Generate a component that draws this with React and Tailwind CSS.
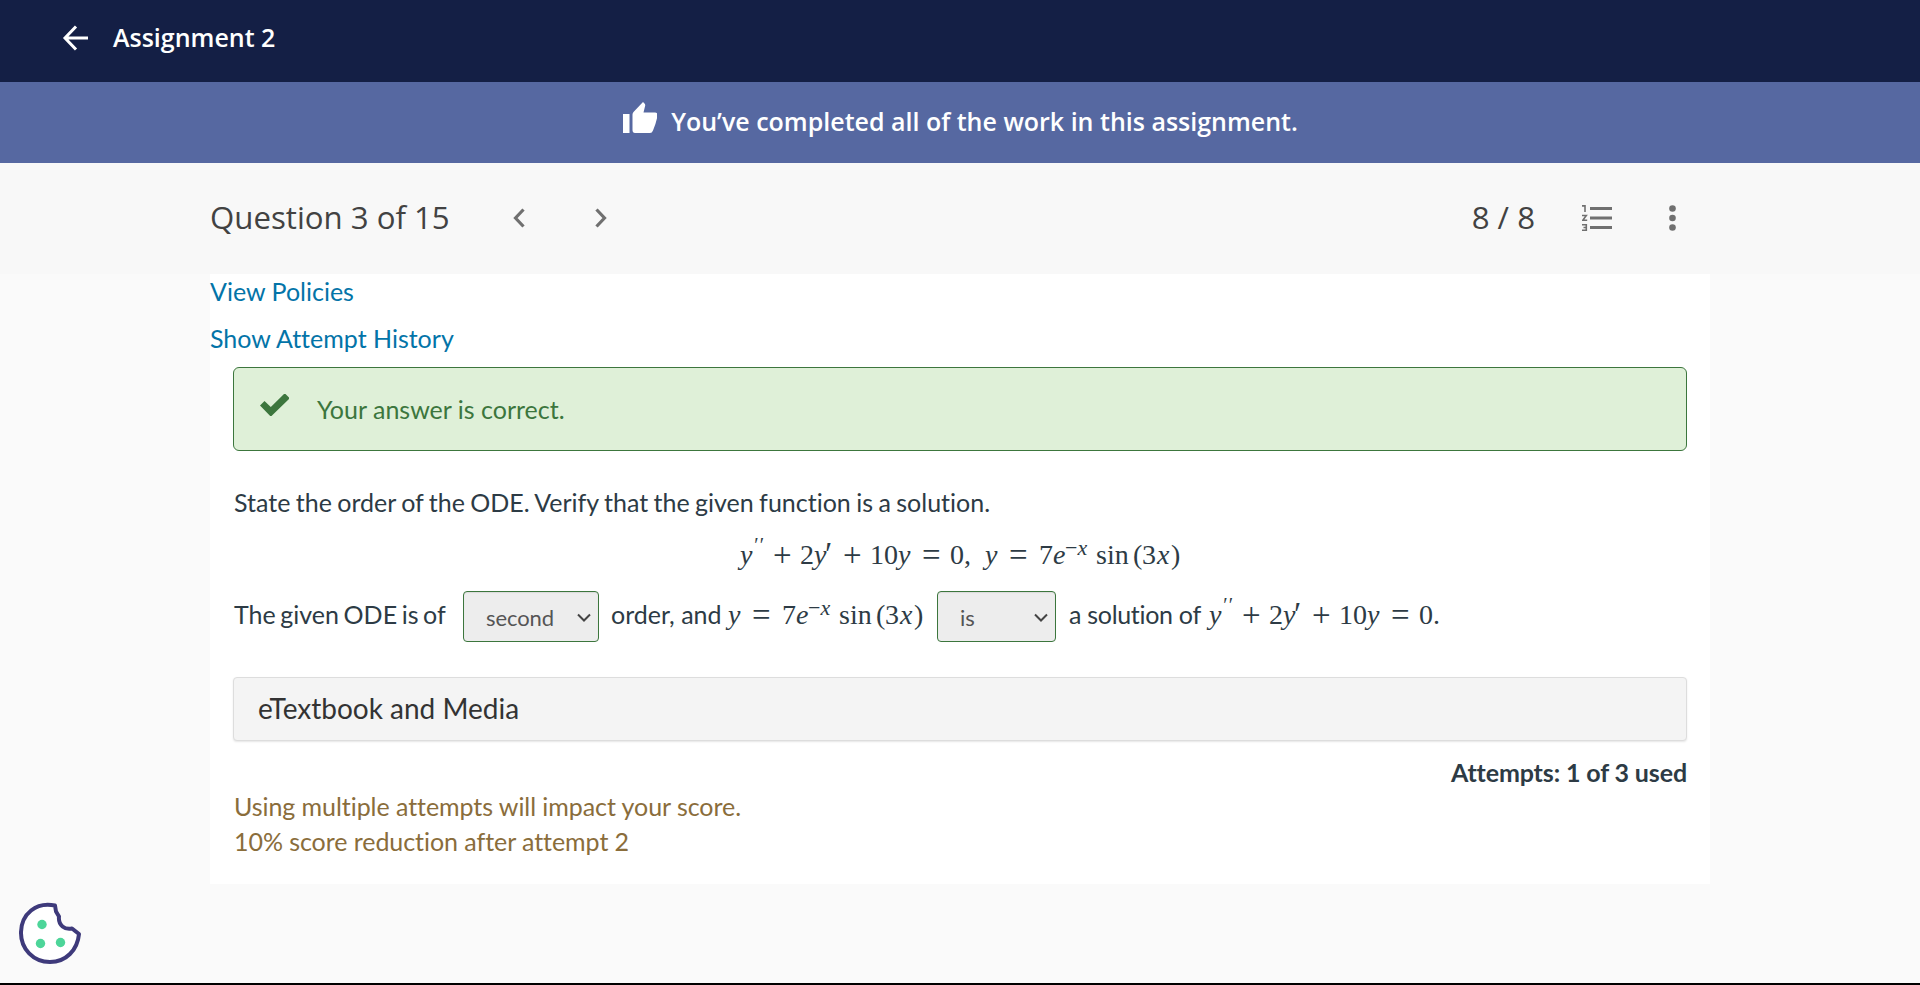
import React from "react";

const sans = "font-['Open_Sans','Noto_Sans',sans-serif]";

function Tok({ w, italic, children }) {
  return (
    <span className={`inline-block whitespace-nowrap ${w} ${italic ? "italic" : ""}`}>{children}</span>
  );
}

function Op({ w, children }) {
  return (
    <span className={`relative top-[2px] inline-block text-[33px] leading-none ${w}`}>{children}</span>
  );
}

function Derivatives() {
  return (
    <>
      <Tok w="w-[13px]" italic>y</Tok>
      <span className="relative -top-[12px] inline-block w-[20px] text-[20px] italic leading-none tracking-[1px]">′′</span>
      <Op w="w-[27px]">+</Op>
      <Tok w="w-[14px]">2</Tok>
      <Tok w="w-[9px]" italic>y</Tok>
      <span className="relative top-px inline-block w-[20px] text-[33px] italic leading-none">′</span>
      <Op w="w-[27px]">+</Op>
      <Tok w="w-[28px]">10</Tok>
      <Tok w="w-[24px]" italic>y</Tok>
      <Op w="w-[28px]">=</Op>
    </>
  );
}

function Solution() {
  return (
    <>
      <Tok w="w-[24px]" italic>y</Tok>
      <Op w="w-[30px]">=</Op>
      <Tok w="w-[14px]">7</Tok>
      <Tok w="w-[12px]" italic>e</Tok>
      <span className="relative -top-[9px] inline-block w-[31px] text-[22px] leading-none">−<i>x</i></span>
      <Tok w="w-[37px]">sin</Tok>
      <Tok w="w-[9px]">(</Tok>
      <Tok w="w-[15px]">3</Tok>
      <Tok w="w-[14px]" italic>x</Tok>
      <Tok w="w-[9px]">)</Tok>
    </>
  );
}

function Formula({ className, children }) {
  return (
    <span className={`h-[32px] font-['Liberation_Serif',serif] text-[28px] leading-[32px] whitespace-nowrap ${className}`}>{children}</span>
  );
}

function Select({ className, children }) {
  return (
    <div className={`flex h-[51px] shrink-0 items-center justify-between rounded-[4px] border border-[#3c763d] bg-[#ededed] pl-[22px] pr-[7px] pt-[2px] text-[22px] tracking-[-0.100px] text-[#555] shadow-[inset_0_1px_1px_rgba(0,0,0,0.08)] ${className}`}>
      <span>{children}</span>
      <svg className="h-[10px] w-[14px]" viewBox="0 0 14 10" fill="none" stroke="#444" strokeWidth="2">
        <path d="M1 1.5l6 6 6-6" />
      </svg>
    </div>
  );
}

export default function App() {
  return (
    <div className="flex h-[985px] w-[1920px] flex-col overflow-hidden border-b-2 border-black bg-[#fafafa] font-['Lato',sans-serif] text-[25px] text-[#2d3b45] [font-variant-ligatures:none]">
      <header className={`flex h-[82px] shrink-0 items-center bg-[#141f45] pb-[6px] pl-[62px] text-white ${sans}`}>
        <svg className="h-[26px] w-[26px]" viewBox="0 0 26 26" fill="none" stroke="#fff" strokeWidth="3">
          <path d="M14 1.500L3 13l11 11.500M3 13H26" />
        </svg>
        <h1 className="ml-[25px] text-[25px] font-semibold">Assignment 2</h1>
      </header>

      <div className={`flex h-[81px] shrink-0 items-center justify-center bg-[#5668a1] pb-[2px] pl-px text-white ${sans}`}>
        <svg className="mr-[14px] mb-[8px] h-[32px] w-[34px]" viewBox="0 0 34 32" fill="#fff">
          <path d="M0 12h6.500v19H0zM9.500 28V12.500q0-1.500 1-2.500L20 0l1.500 1.500q1 1 .6 2.500L20.500 10.500H32q2.500 0 2.500 2.500-.5 6-4.500 15.500-1 2.500-3 2.500H12q-2.500 0-2.500-3z" />
        </svg>
        <span className="text-[25px] font-semibold">You’ve completed all of the work in this assignment.</span>
      </div>

      <div className={`flex h-[111px] shrink-0 items-center bg-[#f8f8f8] px-[210px] pb-[2px] text-[31.200px] text-[#424242] ${sans}`}>
        <h2>Question 3 of 15</h2>
        <svg className="ml-[63px] h-[20px] w-[12px]" viewBox="0 0 12 20" fill="none" stroke="#707070" strokeWidth="3.200">
          <path d="M10.500 1.500L2.500 10l8 8.500" />
        </svg>
        <svg className="ml-[70px] h-[20px] w-[12px]" viewBox="0 0 12 20" fill="none" stroke="#707070" strokeWidth="3.200">
          <path d="M1.500 1.500L9.500 10l-8 8.500" />
        </svg>
        <span className="ml-auto">8 / 8</span>
        <svg className="ml-[47px] h-[28px] w-[30px]" viewBox="0 0 30 28" fill="none" stroke="#707070">
          <path strokeWidth="3" d="M8 4.500h22M8 14h22M8 23.500h22" />
          <path strokeWidth="1.600" d="M0 1.900h3v6M0 11.500h4.300L.8 16.300h4.400M0 20.700h4.300v5.600H0M1.500 23.500h3" />
        </svg>
        <svg className="mr-[34px] ml-[57px] h-[28px] w-[7px]" viewBox="0 0 7 28" fill="#707070">
          <circle cx="3.500" cy="4.500" r="3.300" />
          <circle cx="3.500" cy="14" r="3.300" />
          <circle cx="3.500" cy="23.500" r="3.300" />
        </svg>
      </div>

      <main className="mx-[210px] flex h-[610px] shrink-0 flex-col bg-white leading-[35px]">
        <a className="leading-[35px] text-[#0374a8]">View Policies</a>
        <a className="mt-[12px] leading-[35px] text-[#0374a8]">Show Attempt History</a>
        <div className="mx-[23px] mt-[11px] flex h-[84px] items-center rounded-[6px] border border-[#3c763d] bg-[#dff0d8] pl-[26px] text-[#3c763d]">
          <svg className="mb-[8px] h-[22px] w-[29px]" viewBox="0 0 29 22" fill="#3c763d">
            <path d="M0 11.500L4.500 7l6.300 6L24 0h1.500L29 3.500V5L11.500 22h-1.300z" />
          </svg>
          <span className="ml-[28px]">Your answer is correct.</span>
        </div>

        <p className="mt-[34px] ml-[24px] [word-spacing:-1px]">State the order of the ODE. Verify that the given function is a solution.</p>
        <Formula className="mt-[17px] ml-[530px]">
          <Derivatives />
          <Tok w="w-[14px]">0</Tok>
          <Tok w="w-[21px]">,</Tok>
          <Solution />
        </Formula>

        <div className="mt-[22px] ml-[24px] flex h-[51px] items-center whitespace-nowrap">
          <span className="w-[229px] pb-[5px] [word-spacing:-1.800px]">The given ODE is of</span>
          <Select className="w-[136px]">second</Select>
          <span className="w-[129px] pb-[5px] pl-[12px]">order, and</span>
          <Formula className="w-[209px] -mt-[7px]"><Solution /></Formula>
          <Select className="w-[119px]">is</Select>
          <span className="w-[153px] pb-[5px] pl-[13px] tracking-[-0.300px]">a solution of</span>
          <Formula className="-mt-[7px]">
            <Derivatives />0.
          </Formula>
        </div>

        <div className="mx-[23px] mt-[35px] flex h-[64px] items-center rounded-[4px] border border-[#ddd] bg-[#f4f4f4] pb-[1px] pl-[24px] text-[28px] text-[#333] shadow-[0_1px_2px_rgba(0,0,0,0.1)]">eTextbook and Media</div>
        <div className="mt-[14px] mr-[23px] text-right font-bold tracking-[-0.120px]">Attempts: 1 of 3 used</div>
        <div className="-mt-px ml-[24px] tracking-[-0.060px] text-[#8a6d3b]">
          <p>Using multiple attempts will impact your score.</p>
          <p>10% score reduction after attempt 2</p>
        </div>
      </main>

      <svg className="mt-[18px] ml-[18px] h-[64px] w-[64px]" viewBox="0 0 64 64">
        <path d="M37 3.500C18-.5 3.500 12 3 30c-.5 17 12.500 30 29 30 16 0 27.500-12 29-28l-7-5.500c-7 1.500-14-3-13-12l-3-5z" fill="#fff" stroke="#3e3a7b" strokeWidth="4" strokeLinejoin="round" />
        <circle cx="24" cy="22.500" r="4.700" fill="#4dd599" />
        <circle cx="22.500" cy="41.500" r="4.700" fill="#4dd599" />
        <circle cx="42.500" cy="40.500" r="4.700" fill="#4dd599" />
      </svg>
    </div>
  );
}
